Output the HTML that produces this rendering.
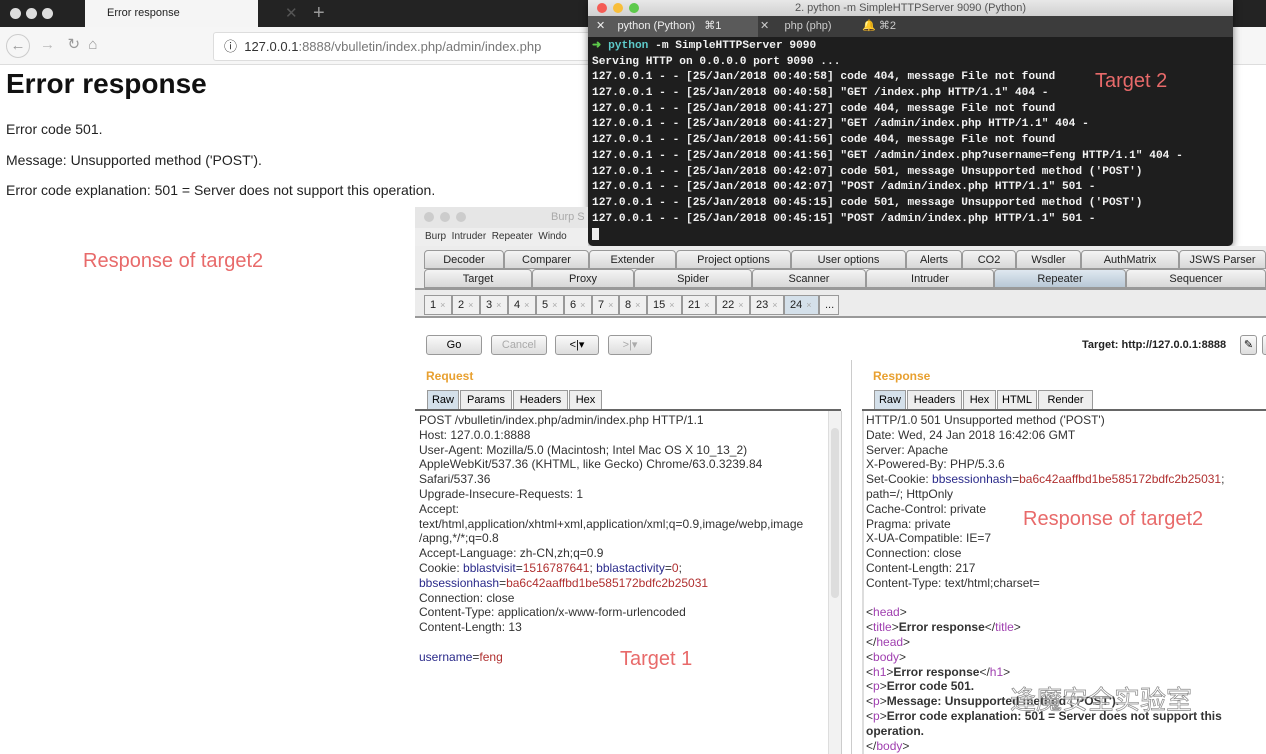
<!DOCTYPE html>
<html><head><meta charset="utf-8"><style>
*{margin:0;padding:0;box-sizing:border-box}
body{width:1266px;height:754px;position:relative;overflow:hidden;background:#fff;font-family:"Liberation Sans",sans-serif}
.a{position:absolute}
.term div{white-space:pre;height:15.7px;line-height:15.7px}
.tab{position:absolute;height:19px;border:1px solid #999;border-radius:4px 4px 0 0;background:linear-gradient(#f4f4f4,#d8d8d8);font-size:11px;text-align:center;line-height:18px;color:#222}
.num{position:absolute;top:295px;height:20px;border:1px solid #999;background:#f0f0f0;font-size:11px;line-height:19px;padding-left:5px;color:#222}
.num i{color:#aaa;font-style:normal;font-size:9px;margin-left:4px}
.txt div{height:14.8px;line-height:14.8px;font-size:12px;color:#333;white-space:pre}
.btn{position:absolute;top:335px;height:20px;border:1px solid #999;border-radius:3px;background:linear-gradient(#fafafa,#ddd);font-size:11px;text-align:center;line-height:19px}
.st{position:absolute;top:390px;height:19px;border:1px solid #999;border-bottom:none;background:#eee;font-size:11px;line-height:18px;text-align:center}
.bl{color:#2a2a8a}.rd{color:#b03030}.pk{color:#a040b0}
</style></head><body>
<div class="a" style="left:0;top:0;width:1266px;height:27px;background:#232323"></div>
<div class="a" style="left:10px;top:8px;width:11px;height:11px;border-radius:50%;background:#ddd;box-shadow:16px 0 #ddd,32px 0 #ddd"></div>
<div class="a" style="left:85px;top:0;width:173px;height:27px;background:#f5f5f5;font-size:11px;line-height:27px;padding-left:22px;color:#222">Error response<span style="position:absolute;left:200px;font-size:15px;color:#555">✕</span></div>
<div class="a" style="left:313px;top:2px;color:#999;font-size:20px">+</div>
<div class="a" style="left:0;top:27px;width:1266px;height:38px;background:#f6f6f6;border-bottom:1px solid #ddd"></div>
<div class="a" style="left:6px;top:34px;width:24px;height:24px;border:1px solid #ccc;border-radius:50%;color:#999;text-align:center;line-height:22px;font-size:15px">←</div>
<div class="a" style="left:40px;top:35px;color:#bbb;font-size:15px">→ &nbsp; <span style="color:#999">↻ &nbsp;⌂</span></div>
<div class="a" style="left:213px;top:32px;width:400px;height:29px;background:#fff;border:1px solid #ddd;border-radius:3px;font-size:13px;line-height:27px;padding-left:10px;color:#333">ⓘ&nbsp; 127.0.0.1<span style="color:#777">:8888/vbulletin/index.php/admin/index.php</span></div>
<div class="a" style="left:6px;top:68px;font-size:28px;font-weight:bold;color:#111">Error response</div>
<div class="a" style="left:6px;top:121px;font-size:14px;color:#222">Error code 501.</div>
<div class="a" style="left:6px;top:152px;font-size:14px;color:#222">Message: Unsupported method ('POST').</div>
<div class="a" style="left:6px;top:182px;font-size:14px;color:#222">Error code explanation: 501 = Server does not support this operation.</div>
<div class="a" style="left:83px;top:250px;font-size:20px;color:#e86a6a">Response of target2</div>
<div class="a" style="left:588px;top:0;width:645px;height:246px;background:#1e1e1e;border-radius:0 0 5px 5px;box-shadow:0 2px 8px rgba(0,0,0,.5)"></div>
<div class="a" style="left:588px;top:0;width:645px;height:16px;background:linear-gradient(#e8e8e8,#d0d0d0);font-size:11px;line-height:16px;text-align:center;color:#555">2. python -m SimpleHTTPServer 9090 (Python)</div>
<div class="a" style="left:597px;top:3px;width:10px;height:10px;border-radius:50%;background:#f45c55;box-shadow:16px 0 #f8be3a,32px 0 #5dc94b"></div>
<div class="a" style="left:588px;top:16px;width:645px;height:21px;background:#3c3c3c"></div>
<div class="a" style="left:588px;top:16px;width:170px;height:21px;background:#5a5a5a;color:#eee;font-size:11px;line-height:21px;padding-left:8px">✕ &nbsp;&nbsp; python (Python) &nbsp;&nbsp;⌘1</div>
<div class="a" style="left:760px;top:16px;color:#ccc;font-size:11px;line-height:21px">✕ &nbsp;&nbsp;&nbsp; php (php) &nbsp;&nbsp;&nbsp;&nbsp;&nbsp;&nbsp;&nbsp;&nbsp;&nbsp;🔔 ⌘2</div>
<div class="a term" style="left:592px;top:39px;font-family:'Liberation Mono',monospace;font-size:11.2px;color:#f2f2f2;font-weight:bold">
<div><span style="color:#5dc94b">➜</span> <span style="color:#5dc9c9">python</span> -m SimpleHTTPServer 9090</div>
<div>Serving HTTP on 0.0.0.0 port 9090 ...</div>
<div>127.0.0.1 - - [25/Jan/2018 00:40:58] code 404, message File not found</div>
<div>127.0.0.1 - - [25/Jan/2018 00:40:58] "GET /index.php HTTP/1.1" 404 -</div>
<div>127.0.0.1 - - [25/Jan/2018 00:41:27] code 404, message File not found</div>
<div>127.0.0.1 - - [25/Jan/2018 00:41:27] "GET /admin/index.php HTTP/1.1" 404 -</div>
<div>127.0.0.1 - - [25/Jan/2018 00:41:56] code 404, message File not found</div>
<div>127.0.0.1 - - [25/Jan/2018 00:41:56] "GET /admin/index.php?username=feng HTTP/1.1" 404 -</div>
<div>127.0.0.1 - - [25/Jan/2018 00:42:07] code 501, message Unsupported method ('POST')</div>
<div>127.0.0.1 - - [25/Jan/2018 00:42:07] "POST /admin/index.php HTTP/1.1" 501 -</div>
<div>127.0.0.1 - - [25/Jan/2018 00:45:15] code 501, message Unsupported method ('POST')</div>
<div>127.0.0.1 - - [25/Jan/2018 00:45:15] "POST /admin/index.php HTTP/1.1" 501 -</div>
<div><span style="background:#eee">&nbsp;</span></div>
</div>
<div class="a" style="left:1095px;top:70px;font-size:20px;color:#e86a6a">Target 2</div>
<div class="a" style="left:415px;top:207px;width:173px;height:21px;background:#e6e6e6;font-size:11px;line-height:21px;color:#aaa;padding-left:136px">Burp S</div>
<div class="a" style="left:424px;top:212px;width:10px;height:10px;border-radius:50%;background:#ccc;box-shadow:16px 0 #ccc,32px 0 #ccc"></div>
<div class="a" style="left:415px;top:228px;width:173px;height:18px;background:#eee;font-size:10px;line-height:18px;padding-left:10px;color:#333">Burp &nbsp;Intruder &nbsp;Repeater &nbsp;Windo</div>
<div class="a" style="left:415px;top:246px;width:851px;height:508px;background:#ececec"></div>
<div class="tab" style="left:424px;top:250px;width:80px">Decoder</div>
<div class="tab" style="left:504px;top:250px;width:85px">Comparer</div>
<div class="tab" style="left:589px;top:250px;width:87px">Extender</div>
<div class="tab" style="left:676px;top:250px;width:115px">Project options</div>
<div class="tab" style="left:791px;top:250px;width:115px">User options</div>
<div class="tab" style="left:906px;top:250px;width:56px">Alerts</div>
<div class="tab" style="left:962px;top:250px;width:54px">CO2</div>
<div class="tab" style="left:1016px;top:250px;width:65px">Wsdler</div>
<div class="tab" style="left:1081px;top:250px;width:98px">AuthMatrix</div>
<div class="tab" style="left:1179px;top:250px;width:87px">JSWS Parser</div>
<div class="tab" style="left:424px;top:269px;width:108px">Target</div>
<div class="tab" style="left:532px;top:269px;width:102px">Proxy</div>
<div class="tab" style="left:634px;top:269px;width:118px">Spider</div>
<div class="tab" style="left:752px;top:269px;width:114px">Scanner</div>
<div class="tab" style="left:866px;top:269px;width:128px">Intruder</div>
<div class="tab" style="left:994px;top:269px;width:132px;background:linear-gradient(#dfe8f0,#b8c8d6)">Repeater</div>
<div class="tab" style="left:1126px;top:269px;width:140px">Sequencer</div>
<div class="a" style="left:415px;top:288px;width:851px;height:2px;background:#999"></div>
<div class="num" style="left:424px;width:28px">1<i>×</i></div>
<div class="num" style="left:452px;width:28px">2<i>×</i></div>
<div class="num" style="left:480px;width:28px">3<i>×</i></div>
<div class="num" style="left:508px;width:28px">4<i>×</i></div>
<div class="num" style="left:536px;width:28px">5<i>×</i></div>
<div class="num" style="left:564px;width:28px">6<i>×</i></div>
<div class="num" style="left:592px;width:27px">7<i>×</i></div>
<div class="num" style="left:619px;width:28px">8<i>×</i></div>
<div class="num" style="left:647px;width:35px">15<i>×</i></div>
<div class="num" style="left:682px;width:34px">21<i>×</i></div>
<div class="num" style="left:716px;width:34px">22<i>×</i></div>
<div class="num" style="left:750px;width:34px">23<i>×</i></div>
<div class="num" style="left:784px;width:35px;background:#d4e0ea">24<i>×</i></div>
<div class="num" style="left:819px;width:20px">...</div>
<div class="a" style="left:415px;top:316px;width:851px;height:2px;background:#999"></div>
<div class="a" style="left:415px;top:318px;width:851px;height:436px;background:#fff"></div>
<div class="btn" style="left:426px;width:56px">Go</div>
<div class="btn" style="left:491px;width:56px;color:#aaa">Cancel</div>
<div class="btn" style="left:555px;width:44px">&lt;|▾</div>
<div class="btn" style="left:608px;width:44px;color:#aaa">&gt;|▾</div>
<div class="a" style="left:1082px;top:339px;font-size:11px;font-weight:bold;color:#222">Target: http://127.0.0.1:8888</div>
<div class="btn" style="left:1240px;width:17px">✎</div>
<div class="btn" style="left:1262px;width:10px"></div>
<div class="a" style="left:851px;top:360px;width:1px;height:394px;background:#ccc"></div>
<div class="a" style="left:426px;top:369px;font-size:12px;font-weight:bold;color:#e8a030">Request</div>
<div class="a" style="left:873px;top:369px;font-size:12px;font-weight:bold;color:#e8a030">Response</div>
<div class="st" style="left:427px;width:32px;background:#d4e0ea">Raw</div>
<div class="st" style="left:460px;width:52px">Params</div>
<div class="st" style="left:513px;width:55px">Headers</div>
<div class="st" style="left:569px;width:33px">Hex</div>
<div class="st" style="left:874px;width:32px;background:#d4e0ea">Raw</div>
<div class="st" style="left:907px;width:55px">Headers</div>
<div class="st" style="left:963px;width:33px">Hex</div>
<div class="st" style="left:997px;width:40px">HTML</div>
<div class="st" style="left:1038px;width:55px">Render</div>
<div class="a" style="left:415px;top:409px;width:426px;height:2px;background:#666"></div>
<div class="a" style="left:862px;top:409px;width:404px;height:2px;background:#666"></div>
<div class="a" style="left:828px;top:411px;width:13px;height:343px;background:#f2f2f2;border-left:1px solid #ddd"></div>
<div class="a" style="left:831px;top:428px;width:8px;height:170px;background:#ddd;border-radius:4px"></div>
<div class="a" style="left:841px;top:411px;width:1px;height:343px;background:#ccc"></div>
<div class="a" style="left:862px;top:411px;width:2px;height:343px;background:#ddd"></div>
<div class="a txt" style="left:419px;top:413px">
<div>POST /vbulletin/index.php/admin/index.php HTTP/1.1</div>
<div>Host: 127.0.0.1:8888</div>
<div>User-Agent: Mozilla/5.0 (Macintosh; Intel Mac OS X 10_13_2)</div>
<div>AppleWebKit/537.36 (KHTML, like Gecko) Chrome/63.0.3239.84</div>
<div>Safari/537.36</div>
<div>Upgrade-Insecure-Requests: 1</div>
<div>Accept:</div>
<div>text/html,application/xhtml+xml,application/xml;q=0.9,image/webp,image</div>
<div>/apng,*/*;q=0.8</div>
<div>Accept-Language: zh-CN,zh;q=0.9</div>
<div>Cookie: <span class="bl">bblastvisit</span>=<span class="rd">1516787641</span>; <span class="bl">bblastactivity</span>=<span class="rd">0</span>;</div>
<div><span class="bl">bbsessionhash</span>=<span class="rd">ba6c42aaffbd1be585172bdfc2b25031</span></div>
<div>Connection: close</div>
<div>Content-Type: application/x-www-form-urlencoded</div>
<div>Content-Length: 13</div>
<div></div>
<div><span class="bl">username</span>=<span class="rd">feng</span></div>
</div>
<div class="a" style="left:620px;top:648px;font-size:20px;color:#e86a6a">Target 1</div>
<div class="a txt" style="left:866px;top:413px">
<div>HTTP/1.0 501 Unsupported method ('POST')</div>
<div>Date: Wed, 24 Jan 2018 16:42:06 GMT</div>
<div>Server: Apache</div>
<div>X-Powered-By: PHP/5.3.6</div>
<div>Set-Cookie: <span class="bl">bbsessionhash</span>=<span class="rd">ba6c42aaffbd1be585172bdfc2b25031</span>;</div>
<div>path=/; HttpOnly</div>
<div>Cache-Control: private</div>
<div>Pragma: private</div>
<div>X-UA-Compatible: IE=7</div>
<div>Connection: close</div>
<div>Content-Length: 217</div>
<div>Content-Type: text/html;charset=</div>
<div></div>
<div>&lt;<span class="pk">head</span>&gt;</div>
<div>&lt;<span class="pk">title</span>&gt;<b>Error response</b>&lt;/<span class="pk">title</span>&gt;</div>
<div>&lt;/<span class="pk">head</span>&gt;</div>
<div>&lt;<span class="pk">body</span>&gt;</div>
<div>&lt;<span class="pk">h1</span>&gt;<b>Error response</b>&lt;/<span class="pk">h1</span>&gt;</div>
<div>&lt;<span class="pk">p</span>&gt;<b>Error code 501.</b></div>
<div>&lt;<span class="pk">p</span>&gt;<b>Message: Unsupported method ('POST').</b></div>
<div>&lt;<span class="pk">p</span>&gt;<b>Error code explanation: 501 = Server does not support this</b></div>
<div><b>operation.</b></div>
<div>&lt;/<span class="pk">body</span>&gt;</div>
</div>
<div class="a" style="left:1023px;top:508px;font-size:20px;color:#e86a6a">Response of target2</div>
<div class="a" style="left:1010px;top:680px;font-size:26px;color:rgba(255,255,255,.6);-webkit-text-stroke:0.7px #888;font-family:'Noto Sans CJK SC',sans-serif">逢魔安全实验室</div>
</body></html>
